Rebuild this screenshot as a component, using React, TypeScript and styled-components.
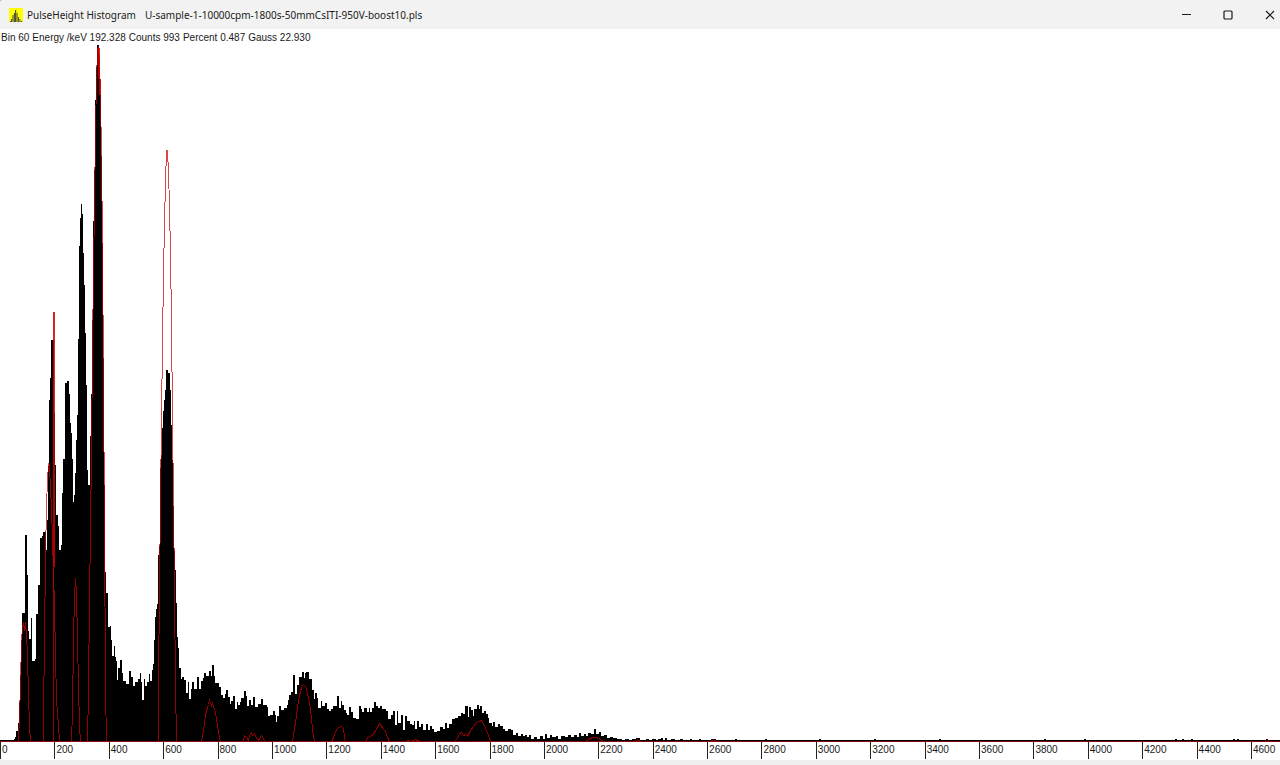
import React from "react";
import styled, { createGlobalStyle } from "styled-components";

const PageStyle = createGlobalStyle`
  * { box-sizing: border-box; }
  body { margin: 0; background: #c4c4c4; }
`;

const Window = styled.div`
  display: flex;
  flex-direction: column;
  height: 100vh;
  min-height: 320px;
  overflow: hidden;
  border-top-left-radius: 4px;
  background: #ffffff;
  color: #1a1a1a;
  font-family: "Liberation Sans", Arial, sans-serif;
`;

const TitleBar = styled.header`
  display: flex;
  align-items: center;
  flex: none;
  height: 29px;
  padding-left: 9px;
  background: #f2f2f2;
  font-family: "Noto Sans", "Segoe UI", sans-serif;
`;

const AppIcon = styled.svg`
  flex: none;
  width: 14px;
  height: 14px;
  margin-right: 4px;
`;

const Title = styled.h1`
  flex: 1;
  display: flex;
  gap: 9px;
  margin: 0;
  font-size: 10px;
  font-weight: 400;
  line-height: 16px;
  white-space: nowrap;
`;

const WindowControls = styled.div`
  display: flex;
  gap: 22px;
`;

const ControlButton = styled.button`
  display: flex;
  align-items: center;
  justify-content: center;
  width: 20px;
  height: 28px;
  padding: 0;
  border: 0;
  background: transparent;
  color: #1a1a1a;
`;

const ControlGlyph = styled.svg`
  width: 10px;
  height: 10px;
  fill: none;
  stroke: currentColor;
`;

const Readout = styled.p`
  flex: none;
  display: flex;
  gap: 3px;
  height: 16px;
  margin: 0;
  padding-left: 1px;
  font-size: 10px;
  line-height: 17px;
  white-space: nowrap;
`;

const Plot = styled.svg`
  display: block;
  flex: 1;
  width: 100%;
  min-height: 0;
`;

const Counts = styled.path`
  fill: #000000;
`;

const Curve = styled.polyline<{ $strong?: boolean }>`
  fill: none;
  stroke: ${(p) => (p.$strong ? "#d00000" : "#cc0000")};
  stroke-opacity: ${(p) => (p.$strong ? 0.85 : 0.72)};
  stroke-width: ${(p) => (p.$strong ? 2 : 1)}px;
  vector-effect: non-scaling-stroke;
  shape-rendering: crispEdges;
`;

const Axis = styled.ol`
  display: flex;
  flex: none;
  height: 19px;
  margin: 0;
  padding: 0;
  overflow: hidden;
  border-top: 1px solid #8c0a0a;
  list-style: none;
`;

const Tick = styled.li`
  flex: none;
  width: 4.25%;
  height: 17px;
  padding-left: 1px;
  border-left: 1px solid #222222;
  font-size: 10px;
  line-height: 16px;
`;

const BottomEdge = styled.footer`
  flex: none;
  height: 5px;
  background: #f0f0f0;
`;

const BASE = 741;
const TOP = 45;

// Each entry is "x,top": the left edge of a run of bins and the height it reaches.
const COUNTS = `
14,739 15,737 16,731 18,723 19,702 20,675 21,640 22,613 25,535 27,575 28,631 29,639 31,618 32,661
35,659 36,614 38,585 40,538 42,536 43,532 46,550 47,520 48,466 49,400 50,378 51,340 54,413 55,465
56,515 58,526 59,550 61,545 62,493 63,459 65,383 67,381 69,394 70,423 71,433 72,459 73,502 74,495
75,473 76,440 77,415 78,339 79,246 80,218 81,204 82,214 83,253 84,285 85,333 86,385 87,470 88,485
90,436 91,394 92,320 93,221 94,170 95,100 96,67 97,45 99,60 100,95 101,156 102,243 103,358 104,485
105,572 106,593 108,627 110,626 111,640 112,656 114,646 115,657 116,661 117,680 118,668 120,660 122,673
123,681 126,684 129,671 131,677 133,686 135,682 138,679 140,673 141,682 142,700 144,679 145,686 147,682
149,674 150,681 152,670 153,664 154,640 155,617 156,609 157,604 158,555 159,546 160,468 161,455 162,428
163,411 164,400 165,390 166,370 168,373 170,390 171,425 172,460 173,506 174,551 175,570 176,603 177,637
178,648 179,668 181,679 182,677 184,680 186,693 188,682 189,699 191,689 192,682 194,689 197,677 199,689
201,681 203,678 204,673 206,676 209,671 211,676 212,665 214,676 215,683 218,683 219,687 221,695 223,698
225,694 226,690 228,697 230,704 231,701 233,696 235,709 237,702 238,705 240,702 241,698 244,691 246,696
247,706 249,700 251,705 253,697 255,707 258,704 261,699 263,705 267,707 268,716 270,715 273,711 275,715
276,722 277,716 279,706 281,710 284,708 287,705 288,700 289,695 291,692 293,675 295,694 297,685 299,677
302,672 304,678 305,673 306,672 309,679 312,690 314,699 315,693 317,698 318,708 321,701 322,706 325,703
327,709 329,711 331,709 333,706 337,696 339,708 341,701 342,705 344,710 346,713 347,715 349,707 351,712
353,718 356,719 359,706 361,709 362,712 364,708 367,712 369,708 370,712 372,708 374,702 376,706 378,708
380,706 382,709 386,711 388,719 391,715 393,711 395,725 397,711 398,723 401,715 403,730 405,716 407,721
410,724 412,725 414,721 415,729 417,721 419,727 421,724 423,730 426,724 428,730 430,726 432,729 434,732
437,731 440,727 443,729 445,723 447,728 449,724 452,719 455,718 458,716 461,713 463,714 465,706 468,717
469,707 471,710 473,716 474,709 477,705 479,709 480,706 482,713 484,711 486,714 488,718 489,723 492,726
493,722 495,727 498,724 500,726 503,729 505,731 508,729 511,730 513,735 516,733 518,736 521,734 523,736
525,735 527,737 529,735 531,739 534,737 537,739 540,736 543,739 545,734 547,738 550,735 552,737 556,736
558,739 561,736 565,737 568,735 571,737 574,735 577,737 579,733 581,736 584,734 586,736 588,733 591,734
594,729 596,734 599,732 601,736 604,735 607,738 610,737 613,738 617,739 622,740 625,739 629,740 632,739
636,738 640,740 646,739 649,740 652,739 656,740 658,739 661,738 663,740 665,738 667,740 671,739 675,740
680,739 683,740 690,739 692,740 699,739 701,740 711,739 716,740 735,739 737,740 765,739 767,740 819,739
821,740 874,739 876,740 939,739 941,740 1044,739 1046,740 1084,739 1086,740 1175,739 1177,740 1182,739
1184,740 1191,739 1193,740 1233,739 1235,740 1237,739 1239,740 1266,739 1268,740`;

const GAUSS = `
18,741 19,715 20,685 21,640 22,628 23,622 24,630 25,622 26,634 27,655 28,695 29,725 30,741
43,741 43,713 44,640 45,556 46,505 47,480 48,463 49,464 50,490 51,505 52,540 53,570 54,607
55,655 56,700 58,725 59,741 71,741 72,710 73,640 74,595 75,578 76,592 77,640 78,685 79,725
80,741 87,741 88,690 89,600 90,530 91,450 92,350 93,270 94,205 95,130 96,80 97,50 98,46
99,60 100,95 101,156 102,243 103,380 104,520 105,690 106,741 158,741 158,680 159,590 160,500
161,420 162,340 163,275 164,222 165,182 166,150 167,150 168,172 169,205 170,255 171,320
172,420 173,502 174,590 175,685 176,741 201,741 203,730 205,715 207,707 208,704 209,700
211,705 212,703 213,706 215,712 217,725 219,738 220,741 243,741 244,735 246,737 248,740
249,735 251,732 252,735 254,733 256,738 258,740 261,735 262,736 264,741 292,741 294,727
295,723 297,707 299,695 301,687 303,684 305,686 307,693 309,702 311,717 312,730 314,741
331,741 333,737 335,731 337,728 338,727 341,726 343,728 344,737 345,741 366,741 367,737
370,736 373,734 375,730 377,727 379,723 380,724 382,728 385,731 387,737 389,741 406,741
408,740 411,741 414,739 418,740 421,741 454,741 457,738 459,733 461,732 463,735 465,734
467,736 470,730 473,726 476,722 479,721 481,720 483,723 485,728 488,735 490,741 585,741
588,739 592,737 596,737 600,739 603,741 634,741 637,739 640,741 710,741 713,739 716,741
1265,741 1267,739 1269,741`;

// The upper part of the selected bin's marker and the crest of the tallest peak are brighter.
const MARKER_TOP = "54,312 54,567";
const MARKER_FOOT = "53,567 53,741";
const CREST = "99,48 99,60 100,95";

// Lifts the line onto pixel centres so that each segment stays one pixel wide.
const onPixelCentre = (points: string) =>
  points
    .trim()
    .split(/\s+/)
    .map((pair) => {
      const [x, y] = pair.split(",").map(Number);
      return `${x + 0.5},${y + 0.5}`;
    })
    .join(" ");

const skyline = (runs: string) => {
  const steps = runs
    .trim()
    .split(/\s+/)
    .map((pair) => {
      const [x, y] = pair.split(",");
      return `H${x}V${y}`;
    })
    .join("");
  return `M0 ${BASE}V${BASE - 1}${steps}H1280V${BASE}Z`;
};

const READOUT = [
  "Bin 60",
  "Energy /keV 192.328",
  "Counts 993",
  "Percent 0.487",
  "Gauss 22.930",
];
const ENERGIES = Array.from({ length: 24 }, (_, i) => i * 200);

export default function App() {
  return (
    <Window>
      <PageStyle />
      <TitleBar>
        <AppIcon viewBox="0 0 14 14" aria-hidden="true">
          <path fill="#ffff00" d="M0 0H14V14H0Z" />
          <path
            fill="#55553c"
            d="M1 13H2V14H1ZM2 11H3V14H2ZM3.4 7H4.6V14H3.4ZM5 5H6V14H5ZM6 2H7.2V14H6ZM7.6 5H8.6V14H7.6ZM9 9H10V14H9ZM10.4 11H11.4V14H10.4ZM12 13H13.3V14H12Z"
          />
        </AppIcon>
        <Title>
          <span>PulseHeight Histogram</span>
          <span>U-sample-1-10000cpm-1800s-50mmCsITI-950V-boost10.pls</span>
        </Title>
        <WindowControls>
          <ControlButton aria-label="Minimize">
            <ControlGlyph viewBox="0 0 10 10">
              <path d="M1 4.5H10" />
            </ControlGlyph>
          </ControlButton>
          <ControlButton aria-label="Maximize">
            <ControlGlyph viewBox="0 0 10 10">
              <rect x="1" y="1" width="8" height="8" rx="1" strokeWidth="1.2" />
            </ControlGlyph>
          </ControlButton>
          <ControlButton aria-label="Close">
            <ControlGlyph viewBox="0 0 10 10">
              <path d="M1 1L9 9M9 1L1 9" strokeWidth="1.2" />
            </ControlGlyph>
          </ControlButton>
        </WindowControls>
      </TitleBar>
      <Readout>
        {READOUT.map((item) => (
          <span key={item}>{item}</span>
        ))}
      </Readout>
      <Plot
        viewBox={`0 ${TOP} 1280 ${BASE - TOP}`}
        preserveAspectRatio="none"
        role="img"
        aria-label="Pulse height histogram"
      >
        <Counts d={skyline(COUNTS)} />
        <Curve points={onPixelCentre(GAUSS)} />
        <Curve points={onPixelCentre(MARKER_FOOT)} />
        <Curve $strong points={MARKER_TOP} />
        <Curve $strong points={CREST} />
      </Plot>
      <Axis>
        {ENERGIES.map((energy) => (
          <Tick key={energy}>{energy}</Tick>
        ))}
      </Axis>
      <BottomEdge />
    </Window>
  );
}
